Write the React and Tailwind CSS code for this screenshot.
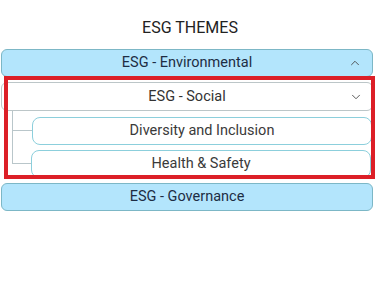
import { ChevronUp, ChevronDown } from 'lucide-react'

const FONT = { fontFamily: 'Roboto, "Noto Sans", sans-serif' }

function ThemeBar({ label, open }) {
  return (
    <div className="relative ml-[1px] w-[372px] h-[28px] flex items-center justify-center bg-[#b3e5fc] border border-[#7cb7c6] rounded-[6px] text-[14.5px] text-[#1d2d44]">
      {label}
      {open !== undefined && (
        <span className="absolute right-[10px] text-[#444]">
          {open ? <ChevronUp size={14} strokeWidth={1.5} /> : <ChevronDown size={14} strokeWidth={1.5} />}
        </span>
      )}
    </div>
  )
}

function SubRow({ label, last }) {
  return (
    <div className={`flex ${last ? 'pt-[5px]' : 'pt-[6px] border-l border-[#b9c6ca]'}`}>
      <div className={`w-[19px] shrink-0 ${last ? '-mt-[5px] h-[19px] border-l border-b border-[#b9c6ca]' : 'h-[14px] border-b border-[#b9c6ca]'}`} />
      <div className="w-[340px] h-[28px] flex items-center justify-center bg-white border border-[#8ccfdc] rounded-[8px] text-[14.5px] text-[#3a3a3a]">
        {label}
      </div>
    </div>
  )
}

export default function App() {
  return (
    <div className="relative w-[380px] h-[298px] bg-white overflow-hidden" style={FONT}>
      <h2 className="pt-[18px] h-[49px] text-center text-[16px] leading-[20px] text-[#222]">ESG THEMES</h2>

      <ThemeBar label="ESG - Environmental" open={true} />

      {/* Social group */}
      <div className="mt-[5px]">
        <div className="relative ml-[1px] w-[372px] h-[29px] flex items-center justify-center bg-white border border-[#bcc6c8] rounded-[6px] text-[14.5px] text-[#333]">
          ESG - Social
          <span className="absolute right-[9px] text-[#444]">
            <ChevronDown size={14} strokeWidth={1.5} />
          </span>
        </div>
        <div className="ml-[12px]">
          <SubRow label="Diversity and Inclusion" />
          <SubRow label="Health & Safety" last />
        </div>
      </div>

      <div className="mt-[5px]">
        <ThemeBar label="ESG - Governance" />
      </div>

      {/* highlight */}
      <div className="absolute left-[4px] top-[76px] w-[371px] h-[103px] border-4 border-[#dc1f27] pointer-events-none" />
    </div>
  )
}
